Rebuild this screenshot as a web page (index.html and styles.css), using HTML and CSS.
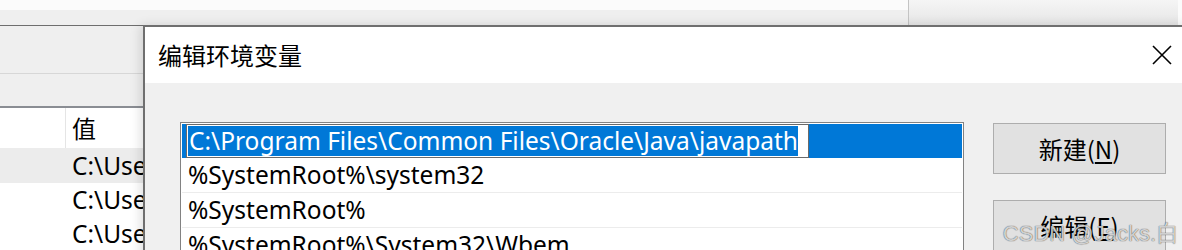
FILE: index.html
```html
<!DOCTYPE html>
<html lang="zh-CN">
<head>
<meta charset="utf-8">
<title>编辑环境变量</title>
<link rel="stylesheet" href="styles.css">
</head>
<body>
<div class="screen">
  <div class="bgwin">
    <div class="bg-top">
      <div class="bg-top-left">
        <div class="bg-strip"></div>
        <div class="bg-grey"></div>
      </div>
      <div class="bg-btn"></div>
      <div class="bg-edge"></div>
    </div>
    <div class="bg-toolbar"></div>
    <div class="bg-table">
      <div class="bg-head">
        <div class="bg-col1"></div>
        <div class="bg-col2">值</div>
      </div>
      <div class="bg-row sel"><div class="bg-col1"></div><div class="bg-col2">C:\Users\Administrator\AppData</div></div>
      <div class="bg-row"><div class="bg-col1"></div><div class="bg-col2">C:\Users\Administrator\AppData</div></div>
      <div class="bg-row"><div class="bg-col1"></div><div class="bg-col2">C:\Users\Administrator\AppData</div></div>
    </div>
  </div>

  <div class="dialog">
    <div class="titlebar">
      <span class="title">编辑环境变量</span>
      <svg class="close" width="20" height="20" viewBox="0 0 20 20"><path d="M1 1L19 19M19 1L1 19" stroke="#000" stroke-width="1.6" fill="none"/></svg>
    </div>
    <div class="dbody">
      <div class="listbox">
        <div class="item active"><span class="edit"><span class="seltext">C:\Program Files\Common Files\Oracle\Java\javapath</span></span></div>
        <div class="item">%SystemRoot%\system32</div>
        <div class="item">%SystemRoot%</div>
        <div class="item">%SystemRoot%\System32\Wbem</div>
      </div>
      <div class="buttons">
        <div class="btn">新建(<u>N</u>)</div>
        <div class="btn">编辑(<u>E</u>)</div>
      </div>
    </div>
  </div>
  <div class="watermark">CSDN @Jacks.白</div>
</div>
</body>
</html>
```

FILE: styles.css
```css
* { box-sizing: border-box; }
html, body { margin: 0; padding: 0; }
body {
  font-family: "Noto Sans", "Noto Sans CJK SC", sans-serif;
  background: #f0f0f0;
}
.screen {
  position: relative;
  width: 1182px;
  height: 250px;
  overflow: hidden;
  background: #f0f0f0;
}
.bgwin { display: flex; flex-direction: column; }
.bg-top { display: flex; height: 26px; border-bottom: 1px solid #6e6e6e; }
.bg-top-left { flex: 1; display: flex; flex-direction: column; }
.bg-strip { height: 10px; background: #fbfbfb; }
.bg-grey { flex: 1; background: #efefef; }
.bg-btn {
  width: 270px;
  border-left: 1px solid #c4c4c4;
  background: linear-gradient(#f5f5f5, #e6e6e6);
}
.bg-edge { width: 4px; background: #fbfbfb; }
.bg-toolbar {
  height: 82px;
  background: #efefef;
  border-bottom: 2px solid #8a8d93;
}
.bg-toolbar::before {
  content: "";
  display: block;
  height: 47px;
  border-bottom: 1px solid #d7d7d7;
}
.bg-table { background: #fff; font-size: 24.5px; color: #000; }
.bg-head { display: flex; height: 40px; align-items: stretch; }
.bg-head .bg-col1 { border-right: 1px solid #e5e5e5; }
.bg-col1 { width: 66px; }
.bg-col2 { padding-left: 6px; display: flex; align-items: center; white-space: nowrap; font-family: "Noto Sans CJK SC", "Noto Sans", sans-serif; font-size: 24px; line-height: 30px; }
.bg-row { display: flex; height: 34px; align-items: center; }
.bg-row .bg-col2 { height: 34px; font-family: "Noto Sans", sans-serif; font-size: 24.5px; }
.bg-row.sel { background: #ececec; height: 35px; }

.dialog {
  position: absolute;
  left: 143px;
  top: 25px;
  width: 1049px;
  height: 300px;
  border: 2px solid #6f6f6f;
  background: #f0f0f0;
  box-shadow: -3px 0 10px rgba(0,0,0,0.12);
}
.titlebar {
  height: 56px;
  background: #fff;
  display: flex;
  align-items: center;
  justify-content: space-between;
  padding: 0 18px 0 13px;
}
.title {
  font-family: "Noto Sans CJK SC", sans-serif;
  font-size: 24px;
  color: #000;
  line-height: 1;
}
.close { display: block; }
.dbody {
  display: flex;
  align-items: flex-start;
  padding: 39px 0 0 35px;
  gap: 29px;
}
.listbox {
  width: 784px;
  height: 200px;
  border: 1px solid #828282;
  background: #fff;
  padding: 1px;
  overflow: hidden;
}
.item {
  height: 35px;
  border-bottom: 1px solid #ececec;
  padding-left: 6px;
  display: flex;
  align-items: center;
  font-size: 24.5px;
  line-height: 30px;
  color: #000;
  white-space: nowrap;
}
.item.active {
  background: #0078d7;
  height: 34px;
  border-bottom: none;
  padding-left: 4px;
  align-items: stretch;
}
.edit {
  display: flex;
  align-items: stretch;
  border: 1px solid #6a6a6a;
  background: #fff;
  padding: 1px 10px 1px 1px;
}
.seltext {
  background: #0078d7;
  color: #fff;
  padding-left: 1px;
  display: flex;
  align-items: center;
}
.buttons { display: flex; flex-direction: column; gap: 26px; padding-top: 1px; }
.btn {
  width: 173px;
  height: 51px;
  border: 1px solid #adadad;
  background: #e1e1e1;
  display: flex;
  align-items: center;
  justify-content: center;
  font-family: "Noto Sans CJK SC", "Noto Sans", sans-serif;
  font-size: 24px;
  line-height: 30px;
  color: #000;
}
.btn u { text-underline-offset: 3px; }
.watermark {
  position: absolute;
  right: 4px;
  bottom: 3px;
  font-family: "Liberation Sans", "Noto Sans CJK SC", sans-serif;
  font-size: 22px;
  line-height: 26px;
  color: rgba(255,255,255,0.75);
  text-shadow: 0 0 1px rgba(0,0,0,0.6), 0 0 1px rgba(0,0,0,0.4);
  white-space: nowrap;
}
```
